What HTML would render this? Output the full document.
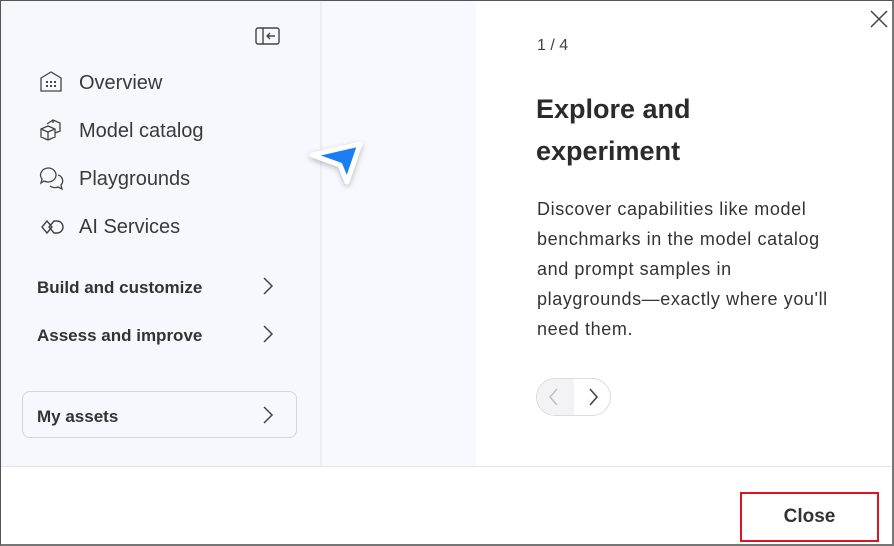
<!DOCTYPE html>
<html><head><style>
*{margin:0;padding:0;box-sizing:border-box}
body{width:894px;height:546px;overflow:hidden;background:#fff;font-family:"Liberation Sans",sans-serif;position:relative;color:#242424}
.frame{position:absolute;left:0;top:0;width:894px;height:546px;border:1px solid #555;border-right:2px solid #777;border-bottom:2px solid #777}
.left{position:absolute;left:1px;top:1px;width:319px;height:465px;background:#f7f8fd}
.mid{position:absolute;left:320px;top:1px;width:156px;height:465px;background:#f8f9fe;border-left:2px solid #eceef4}
.sep{position:absolute;left:1px;top:466px;width:890px;height:1px;background:#e4e4e4}
.t{position:absolute;font-size:20px;color:#3a3a3a}
.b{position:absolute;font-size:17px;font-weight:bold;color:#333}
svg{position:absolute}
</style></head><body>
<div class="left"></div><div class="mid"></div><div class="sep"></div>
<svg style="left:255px;top:27px" width="26" height="20" viewBox="0 0 26 20"><rect x="1" y="1" width="23" height="16" rx="2" fill="none" stroke="#444" stroke-width="1.4"/><line x1="8" y1="1" x2="8" y2="17" stroke="#444" stroke-width="1.4"/><path d="M20 9H12M15 6l-3 3 3 3" fill="none" stroke="#444" stroke-width="1.4"/></svg>
<svg style="left:39px;top:70px" width="24" height="24" viewBox="0 0 24 24" fill="none" stroke="#444" stroke-width="1.3"><path d="M2 8l10-6 10 6v13H2z"/><g fill="#444" stroke="none"><rect x="7" y="11" width="2" height="2"/><rect x="11" y="11" width="2" height="2"/><rect x="15" y="11" width="2" height="2"/><rect x="7" y="15" width="2" height="2"/><rect x="11" y="15" width="2" height="2"/><rect x="15" y="15" width="2" height="2"/></g></svg>
<div class="t" style="left:79px;top:72px">Overview</div>
<svg style="left:39px;top:118px" width="24" height="24" viewBox="0 0 24 24" fill="none" stroke="#444" stroke-width="1.3"><path d="M2 11l7-3 7 3v8l-7 3-7-3z M2 11l7 3 7-3 M9 14v8 M8 6l6-4 7 3v8l-5 2 M14 2v3"/></svg>
<div class="t" style="left:79px;top:120px">Model catalog</div>
<svg style="left:39px;top:166px" width="26" height="26" viewBox="0 0 26 26" fill="none" stroke="#444" stroke-width="1.3"><path d="M10 2a8 7 0 1 1-5 13l-3 2 1-4A8 7 0 0 1 10 2z M19 9a6 6 0 0 1 3 10l1 4-4-2a7 6 0 0 1-8-1"/></svg>
<div class="t" style="left:79px;top:168px">Playgrounds</div>
<svg style="left:39px;top:218px" width="26" height="18" viewBox="0 0 26 18" fill="none" stroke="#444" stroke-width="1.4"><path d="M8 3L3 9l5 6 5-6z M15 3l-5 6 5 6h3a6 6 0 0 0 0-12z"/></svg>
<div class="t" style="left:79px;top:216px">AI Services</div>
<div class="b" style="left:37px;top:278px">Build and customize</div>
<div class="b" style="left:37px;top:326px">Assess and improve</div>
<div style="position:absolute;left:22px;top:391px;width:275px;height:47px;border:1px solid #d6d6d6;border-radius:8px"></div>
<div class="b" style="left:37px;top:407px">My assets</div>
<svg style="left:260px;top:276px" width="16" height="20" viewBox="0 0 16 20"><path d="M4 2l8 8-8 8" fill="none" stroke="#444" stroke-width="1.5"/></svg>
<svg style="left:260px;top:324px" width="16" height="20" viewBox="0 0 16 20"><path d="M4 2l8 8-8 8" fill="none" stroke="#444" stroke-width="1.5"/></svg>
<svg style="left:260px;top:405px" width="16" height="20" viewBox="0 0 16 20"><path d="M4 2l8 8-8 8" fill="none" stroke="#444" stroke-width="1.5"/></svg>
<svg style="left:300px;top:132px" width="72" height="66" viewBox="0 0 72 66"><path d="M12 23L60 12 47 50 40 33z" fill="#1b7ff3" stroke="#fff" stroke-width="5" stroke-linejoin="round" style="filter:drop-shadow(0 2px 3px rgba(0,0,0,.25))"/></svg>
<div style="position:absolute;left:537px;top:37px;font-size:16px;color:#444">1 / 4</div>
<div style="position:absolute;left:536px;top:88px;font-size:27px;line-height:42px;color:#2b2b2b;font-weight:600">Explore and<br>experiment</div>
<div style="position:absolute;left:537px;top:194px;width:350px;font-size:18px;letter-spacing:0.6px;line-height:30px;color:#333;white-space:nowrap">Discover capabilities like model<br>benchmarks in the model catalog<br>and prompt samples in<br>playgrounds—exactly where you'll<br>need them.</div>
<div style="position:absolute;left:536px;top:378px;width:75px;height:38px;border:1px solid #dcdcdc;border-radius:19px;overflow:hidden;background:#fff"><div style="width:37px;height:100%;background:#f3f2f5"></div></div>
<svg style="left:546px;top:386px" width="16" height="22" viewBox="0 0 16 22"><path d="M11 3L4 11l7 8" fill="none" stroke="#c0c0c0" stroke-width="1.5"/></svg>
<svg style="left:585px;top:386px" width="16" height="22" viewBox="0 0 16 22"><path d="M5 3l7 8-7 8" fill="none" stroke="#444" stroke-width="1.6"/></svg>
<svg style="left:868px;top:8px" width="22" height="22" viewBox="0 0 22 22"><path d="M3 3l16 16M19 3L3 19" stroke="#444" stroke-width="1.5"/></svg>
<div style="position:absolute;left:740px;top:492px;width:139px;height:50px;border:2px solid #e0141f;font-size:19px;font-weight:bold;color:#333;text-align:center;line-height:46px">Close</div>
<div class="frame"></div>
</body></html>
